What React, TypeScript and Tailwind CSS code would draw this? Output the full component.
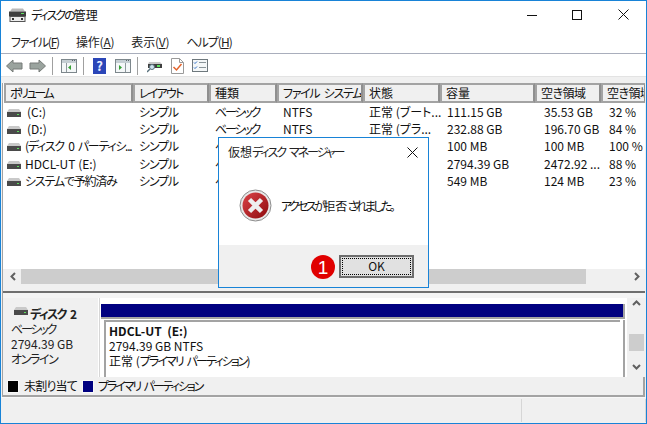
const font = '[font-family:"Noto_Sans_CJK_JP",sans-serif] [font-feature-settings:"palt"]';

const columns = [
  { label: 'ボリューム', w: 129, t: 'tracking-[-2.4px]' },
  { label: 'レイアウト', w: 76, t: 'tracking-[-1.8px]' },
  { label: '種類', w: 68, t: '' },
  { label: 'ファイル システム', w: 86, t: 'tracking-[-1.3px] [word-spacing:3px]' },
  { label: '状態', w: 77, t: '' },
  { label: '容量', w: 95, t: '' },
  { label: '空き領域', w: 66, t: 'tracking-[-0.5px]' },
  { label: '空き領域', w: 45, t: 'tracking-[-0.5px]' },
];

const rows = [
  { name: '(C:)', pad: 'pl-[23px]', type: 'ベーシック', fs: 'NTFS', state: '正常 (ブート...', size: '111.15 GB', free: '35.53 GB', pct: '32 %' },
  { name: '(D:)', pad: 'pl-[23px]', type: 'ベーシック', fs: 'NTFS', state: '正常 (プラ...', size: '232.88 GB', free: '196.70 GB', pct: '84 %' },
  { name: '(ディスク 0 パーティシ...', pad: 'pl-[21px] tracking-[-1.3px] [word-spacing:3px]', type: 'ベ', fs: '', state: '', size: '100 MB', free: '100 MB', pct: '100 %' },
  { name: 'HDCL-UT (E:)', pad: 'pl-[21px]', type: 'ベ', fs: '', state: '', size: '2794.39 GB', free: '2472.92 ...', pct: '88 %' },
  { name: 'システムで予約済み', pad: 'pl-[21px] tracking-[-1.2px]', type: 'ベ', fs: '', state: '', size: '549 MB', free: '124 MB', pct: '23 %' },
];

function DriveIcon({ className = '' }: { className?: string }) {
  return (
    <svg className={className} width="14" height="8" viewBox="0 0 14 8">
      <path d="M2 0h10l2 3H0z" fill="#c9c9c9" />
      <rect x="0" y="3" width="14" height="5" fill="#4a4a4a" />
      <rect x="10" y="5" width="2" height="1" fill="#5fe05f" />
    </svg>
  );
}

function Panel({ arrow, divider }: { arrow: string; divider: string }) {
  return (
    <svg width="16" height="14" viewBox="0 0 16 14">
      <rect x="0.5" y="0.5" width="15" height="13" fill="#f4f7f8" stroke="#7d878c" />
      <rect x="1" y="1" width="14" height="3" fill="#c5ced3" />
      <path d="M11 1.5h1M13 1.5h1" stroke="#59646a" />
      <path d={divider} stroke="#8e989d" />
      <path d={arrow} fill="#35a035" />
    </svg>
  );
}

function Toolbar() {
  return (
    <div className="flex h-[23px] items-center border-b border-[#e3e3e3] bg-white pl-[5px] pt-[1px]">
      <svg width="17" height="14" viewBox="0 0 17 14">
        <path d="M0.5 7L7 1v3h9v6H7v3z" fill="#9aa39e" stroke="#767b78" />
      </svg>
      <svg className="ml-[6px]" width="17" height="14" viewBox="0 0 17 14">
        <path d="M16.5 7L10 1v3H1v6h9v3z" fill="#9aa39e" stroke="#767b78" />
      </svg>
      <div className="ml-[6px] h-[18px] w-px bg-[#a0a0a0]" />
      <div className="ml-[8px]">
        <Panel arrow="M7 8.5l3-2.5v5z" divider="M5.5 4v9" />
      </div>
      <div className="ml-[6px] h-[18px] w-px bg-[#a0a0a0]" />
      <div className="ml-[9px] flex h-[16px] w-[13px] items-center justify-center bg-[#2b46b8] text-[13px] font-bold leading-none text-[#e8ecff]">?</div>
      <div className="ml-[9px]">
        <Panel arrow="M4 6l3 2.5-3 2.5z" divider="M10.5 4v9" />
      </div>
      <div className="ml-[6px] h-[18px] w-px bg-[#a0a0a0]" />
      <svg className="ml-[9px]" width="15" height="14" viewBox="0 0 15 14">
        <path d="M2 3h11l2 2H1z" fill="#c9c9c9" />
        <rect x="1" y="5" width="14" height="4" fill="#3f3f3f" />
        <rect x="10" y="6" width="3" height="2" fill="#5fe05f" />
        <circle cx="5" cy="8" r="2.5" fill="#cfe3ee" stroke="#58707c" />
        <path d="M3 10l-3 3" stroke="#58707c" strokeWidth="1.5" />
      </svg>
      <svg className="ml-[9px]" width="13" height="16" viewBox="0 0 13 16">
        <path d="M0.5 0.5h8l4 4v11H0.5z" fill="#fff" stroke="#9a9a9a" />
        <path d="M8.5 0.5v4h4" fill="none" stroke="#9a9a9a" />
        <path d="M2.5 9l3 3 5-6" fill="none" stroke="#e2622b" strokeWidth="1.5" />
      </svg>
      <svg className="ml-[8px]" width="16" height="13" viewBox="0 0 16 13">
        <rect x="0.5" y="0.5" width="15" height="12" fill="#f4f7f8" stroke="#6e787d" />
        <path d="M2 3.5l1 1 2-2M2 8.5l1 1 2-2" fill="none" stroke="#2f6fc8" />
        <path d="M7 3.5h7M7 8.5h7" stroke="#8a9499" />
      </svg>
    </div>
  );
}

function VolumeTable() {
  return (
    <div className="flex h-[186px] flex-col overflow-hidden bg-white">
      <div className="flex h-[20px] shrink-0 pl-[1px]">
        {columns.map((c, i) => (
          <div
            key={i}
            className={`flex shrink-0 items-center overflow-hidden whitespace-nowrap border-2 border-[#a3a3a3] border-r-[#8f8f8f] bg-[#f0f0f0] pl-[4px] text-[12px] leading-none text-[#111] ${c.t}`}
            style={{ width: c.w }}
          >
            {c.label}
          </div>
        ))}
      </div>
      <div className="flex-1">
        {rows.map((r) => (
          <div key={r.name} className="flex h-[17.3px] items-center whitespace-nowrap pl-[1px] text-[12px] leading-none text-[#111]">
            <div className={`relative w-[129px] shrink-0 ${r.pad}`}>
              <DriveIcon className="absolute left-[3px] top-[3px]" />
              {r.name}
            </div>
            <div className="w-[76px] shrink-0 pl-[6px] tracking-[-1.2px]">シンプル</div>
            <div className="w-[68px] shrink-0 pl-[6px] tracking-[-2.2px]">{r.type}</div>
            <div className="w-[86px] shrink-0 pl-[6px]">{r.fs}</div>
            <div className="w-[77px] shrink-0 pl-[6px]">{r.state}</div>
            <div className="w-[95px] shrink-0 pl-[7px]">{r.size}</div>
            <div className="w-[66px] shrink-0 pl-[9px]">{r.free}</div>
            <div className="w-[45px] shrink-0 pl-[8px]">{r.pct}</div>
          </div>
        ))}
      </div>
    </div>
  );
}

function HScroll() {
  return (
    <div className="flex h-[15px] items-center bg-[#f0f0f0]">
      <svg className="ml-[7px] w-[6px]" width="6" height="9" viewBox="0 0 6 9">
        <path d="M5 1L1.5 4.5 5 8" fill="none" stroke="#606060" strokeWidth="2" />
      </svg>
      <div className="ml-[5px] h-[15px] w-[565px] bg-[#cdcdcd]" />
      <div className="flex-1" />
      <svg className="mr-[5px]" width="6" height="9" viewBox="0 0 6 9">
        <path d="M1 1l3.5 3.5L1 8" fill="none" stroke="#606060" strokeWidth="2" />
      </svg>
    </div>
  );
}

function DiskPane() {
  return (
    <div className="flex h-[86px] flex-col border-t-2 border-[#6f6f6f] bg-[#f4f4f4] pt-[5px]">
      <div className="flex min-h-0 flex-1">
        <div className="flex min-w-0 flex-1">
          <div className="w-[96px] shrink-0 border-r border-white bg-[#f0f0f0] pl-[8px] pt-[8px] text-[12px] leading-[15px] text-[#222]">
            <div className="flex items-center whitespace-pre pl-[3px] font-bold tracking-[-1.6px] [word-spacing:3px]">
              <DriveIcon className="mr-[2px] mt-[-5px]" />
              ディスク 2
            </div>
            <div className="tracking-[-2.2px]">ベーシック</div>
            <div>2794.39 GB</div>
            <div className="tracking-[-1.4px]">オンライン</div>
          </div>
          <div className="flex min-w-0 flex-1 flex-col border-l border-[#d6d6d6] bg-white pl-[1px] pt-[6px]">
            <div className="mr-[2px] h-[15px] border-b-[2px] border-r-[2px] border-[#a3a3a3] bg-[#000080]" />
            <div className="ml-[3px] mr-[2px] mt-[1px] flex-1 border-r-2 border-[#a3a3a3] pr-[3px]">
              <div className="h-full border-l-2 border-t-2 border-[#a3a3a3] pl-[3px] pt-[1px] text-[12px] leading-[15px] text-[#111]">
                <div className="font-bold">HDCL-UT&nbsp; (E:)</div>
                <div>2794.39 GB NTFS</div>
                <div>
                  正常 (<span className="tracking-[-1.9px] [word-spacing:3px]">プライマリ パーティション</span>)
                </div>
              </div>
            </div>
          </div>
        </div>
        <div className="flex w-[18px] shrink-0 flex-col items-center bg-[#f0f0f0]">
          <svg className="mt-[2px]" width="9" height="6" viewBox="0 0 9 6">
            <path d="M1 5l3.5-3.5L8 5" fill="none" stroke="#606060" strokeWidth="2" />
          </svg>
          <div className="mt-[28px] h-[17px] w-[15px] bg-[#cdcdcd]" />
          <div className="flex-1" />
          <svg className="mb-[7px]" width="9" height="6" viewBox="0 0 9 6">
            <path d="M1 1l3.5 3.5L8 1" fill="none" stroke="#606060" strokeWidth="2" />
          </svg>
        </div>
      </div>
    </div>
  );
}

function Legend() {
  return (
    <div className="flex h-[20px] items-center border-b-2 border-r-2 border-[#a3a3a3] bg-[#f0f0f0] pl-[4px] text-[12px] leading-none text-[#111]">
      <div className="h-[13px] w-[12px] border border-[#f8f8f8] bg-black" />
      <span className="ml-[5px] tracking-[-0.8px]">未割り当て</span>
      <div className="ml-[5px] h-[13px] w-[12px] border border-[#f8f8f8] bg-[#000080]" />
      <span className="ml-[4px] tracking-[-2.1px] [word-spacing:3px]">プライマリ パーティション</span>
    </div>
  );
}

function ErrorDialog() {
  return (
    <div className="absolute left-[217px] top-[136px] flex h-[151px] w-[211px] flex-col border border-[#1883d7] bg-white">
      <div className="flex h-[28px] items-center justify-between pl-[9px] pr-[10px] text-[12px] leading-none text-[#222]">
        <span>
          仮想<span className="tracking-[-2px] [word-spacing:3px]">ディスク マネージャー</span>
        </span>
        <svg width="11" height="11" viewBox="0 0 11 11">
          <path d="M0.5 0.5l10 10M10.5 0.5l-10 10" stroke="#111" />
        </svg>
      </div>
      <div className="flex h-[79px] items-center whitespace-nowrap pl-[20px] text-[12px] leading-none text-[#111]">
        <svg className="shrink-0" width="33" height="33" viewBox="0 0 33 33">
          <defs>
            <linearGradient id="err" x1="0" y1="0" x2="1" y2="1">
              <stop offset="0" stopColor="#dc4348" />
              <stop offset="1" stopColor="#8d0b0e" />
            </linearGradient>
          </defs>
          <circle cx="16.5" cy="16.5" r="15.5" fill="#e8e8e8" stroke="#8c8c8c" />
          <circle cx="16.5" cy="16.5" r="13" fill="url(#err)" />
          <path d="M10.5 10.5l12 12M22.5 10.5l-12 12" stroke="#eee" strokeWidth="4.5" />
        </svg>
        <span className="ml-[9px]">
          <span className="tracking-[-2.6px]">アクセスが</span>拒否<span className="tracking-[-2.6px]">されました。</span>
        </span>
      </div>
      <div className="relative flex flex-1 items-center justify-end bg-[#f0f0f0] pr-[14px]">
        <div className="absolute left-[92px] top-[10px] flex h-[24px] w-[24px] items-center justify-center rounded-full bg-[#e00000] font-['Liberation_Sans'] text-[19px] leading-none text-white">1</div>
        <div className="flex h-[23px] w-[75px] items-center justify-center border-2 border-[#6e6e6e] bg-[#e1e1e1] p-px">
          <div className="flex h-full w-full items-center justify-center border border-dotted border-black text-[12px] leading-none text-[#111]">OK</div>
        </div>
      </div>
    </div>
  );
}

export default function App() {
  return (
    <div className={`relative flex h-[424px] w-[647px] flex-col overflow-hidden border border-[#1883d7] bg-[#f0f0f0] ${font}`}>
      <div className="flex h-[29px] shrink-0 items-center bg-white pb-[2px] pl-[8px] text-[12px] leading-none text-[#111]">
        <svg width="17" height="14" viewBox="0 0 17 14">
          <path d="M3 0.5h11l2 3H1z" fill="#b9b9b9" />
          <rect x="0" y="3.5" width="17" height="5" fill="#3f3f3f" />
          <rect x="12" y="5" width="3" height="1" fill="#5fe05f" />
          <rect x="1" y="8.5" width="15" height="5" fill="#ededed" stroke="#555" />
          <rect x="3" y="10" width="2" height="2" fill="#333" />
          <rect x="12" y="10" width="2" height="2" fill="#333" />
        </svg>
        <span className="ml-[5px]">
          <span className="tracking-[-2px]">ディスクの</span>管理
        </span>
        <div className="ml-auto flex items-center">
          <svg width="10" height="10" viewBox="0 0 10 10">
            <path d="M0 5.5h10" stroke="#111" />
          </svg>
          <svg className="ml-[35px]" width="10" height="10" viewBox="0 0 10 10">
            <rect x="0.5" y="0.5" width="9" height="9" fill="none" stroke="#111" />
          </svg>
          <svg className="ml-[36px] mr-[17px]" width="11" height="11" viewBox="0 0 11 11">
            <path d="M0.5 0.5l10 10M10.5 0.5l-10 10" stroke="#111" />
          </svg>
        </div>
      </div>
      <div className="flex h-[24px] shrink-0 items-center gap-[17px] border-b border-[#a9aebc] bg-white pl-[10px] text-[12px] leading-none text-[#222]">
        <span className="tracking-[-1.2px]">ファイル(<u>F</u>)</span>
        <span className="tracking-[-0.2px]">操作(<u>A</u>)</span>
        <span className="tracking-[-0.2px]">表示(<u>V</u>)</span>
        <span className="tracking-[-1px]">ヘルプ(<u>H</u>)</span>
      </div>
      <Toolbar />
      <div className="h-[6px] shrink-0 bg-[#f0f0f0]" />
      <div className="flex shrink-0 flex-col pl-[1px] pr-px">
        <div className="border-l border-[#a3a3a3]">
          <VolumeTable />
          <HScroll />
          <div className="h-[7px] bg-[#f0f0f0]" />
          <DiskPane />
          <Legend />
        </div>
      </div>
      <div className="flex flex-1 border-t border-[#f8f8f8] bg-[#f0f0f0] pt-[1px]">
        <div className="ml-auto mb-[1px] w-[125px] border-x border-[#d6d6d6]" />
      </div>
      <ErrorDialog />
    </div>
  );
}
